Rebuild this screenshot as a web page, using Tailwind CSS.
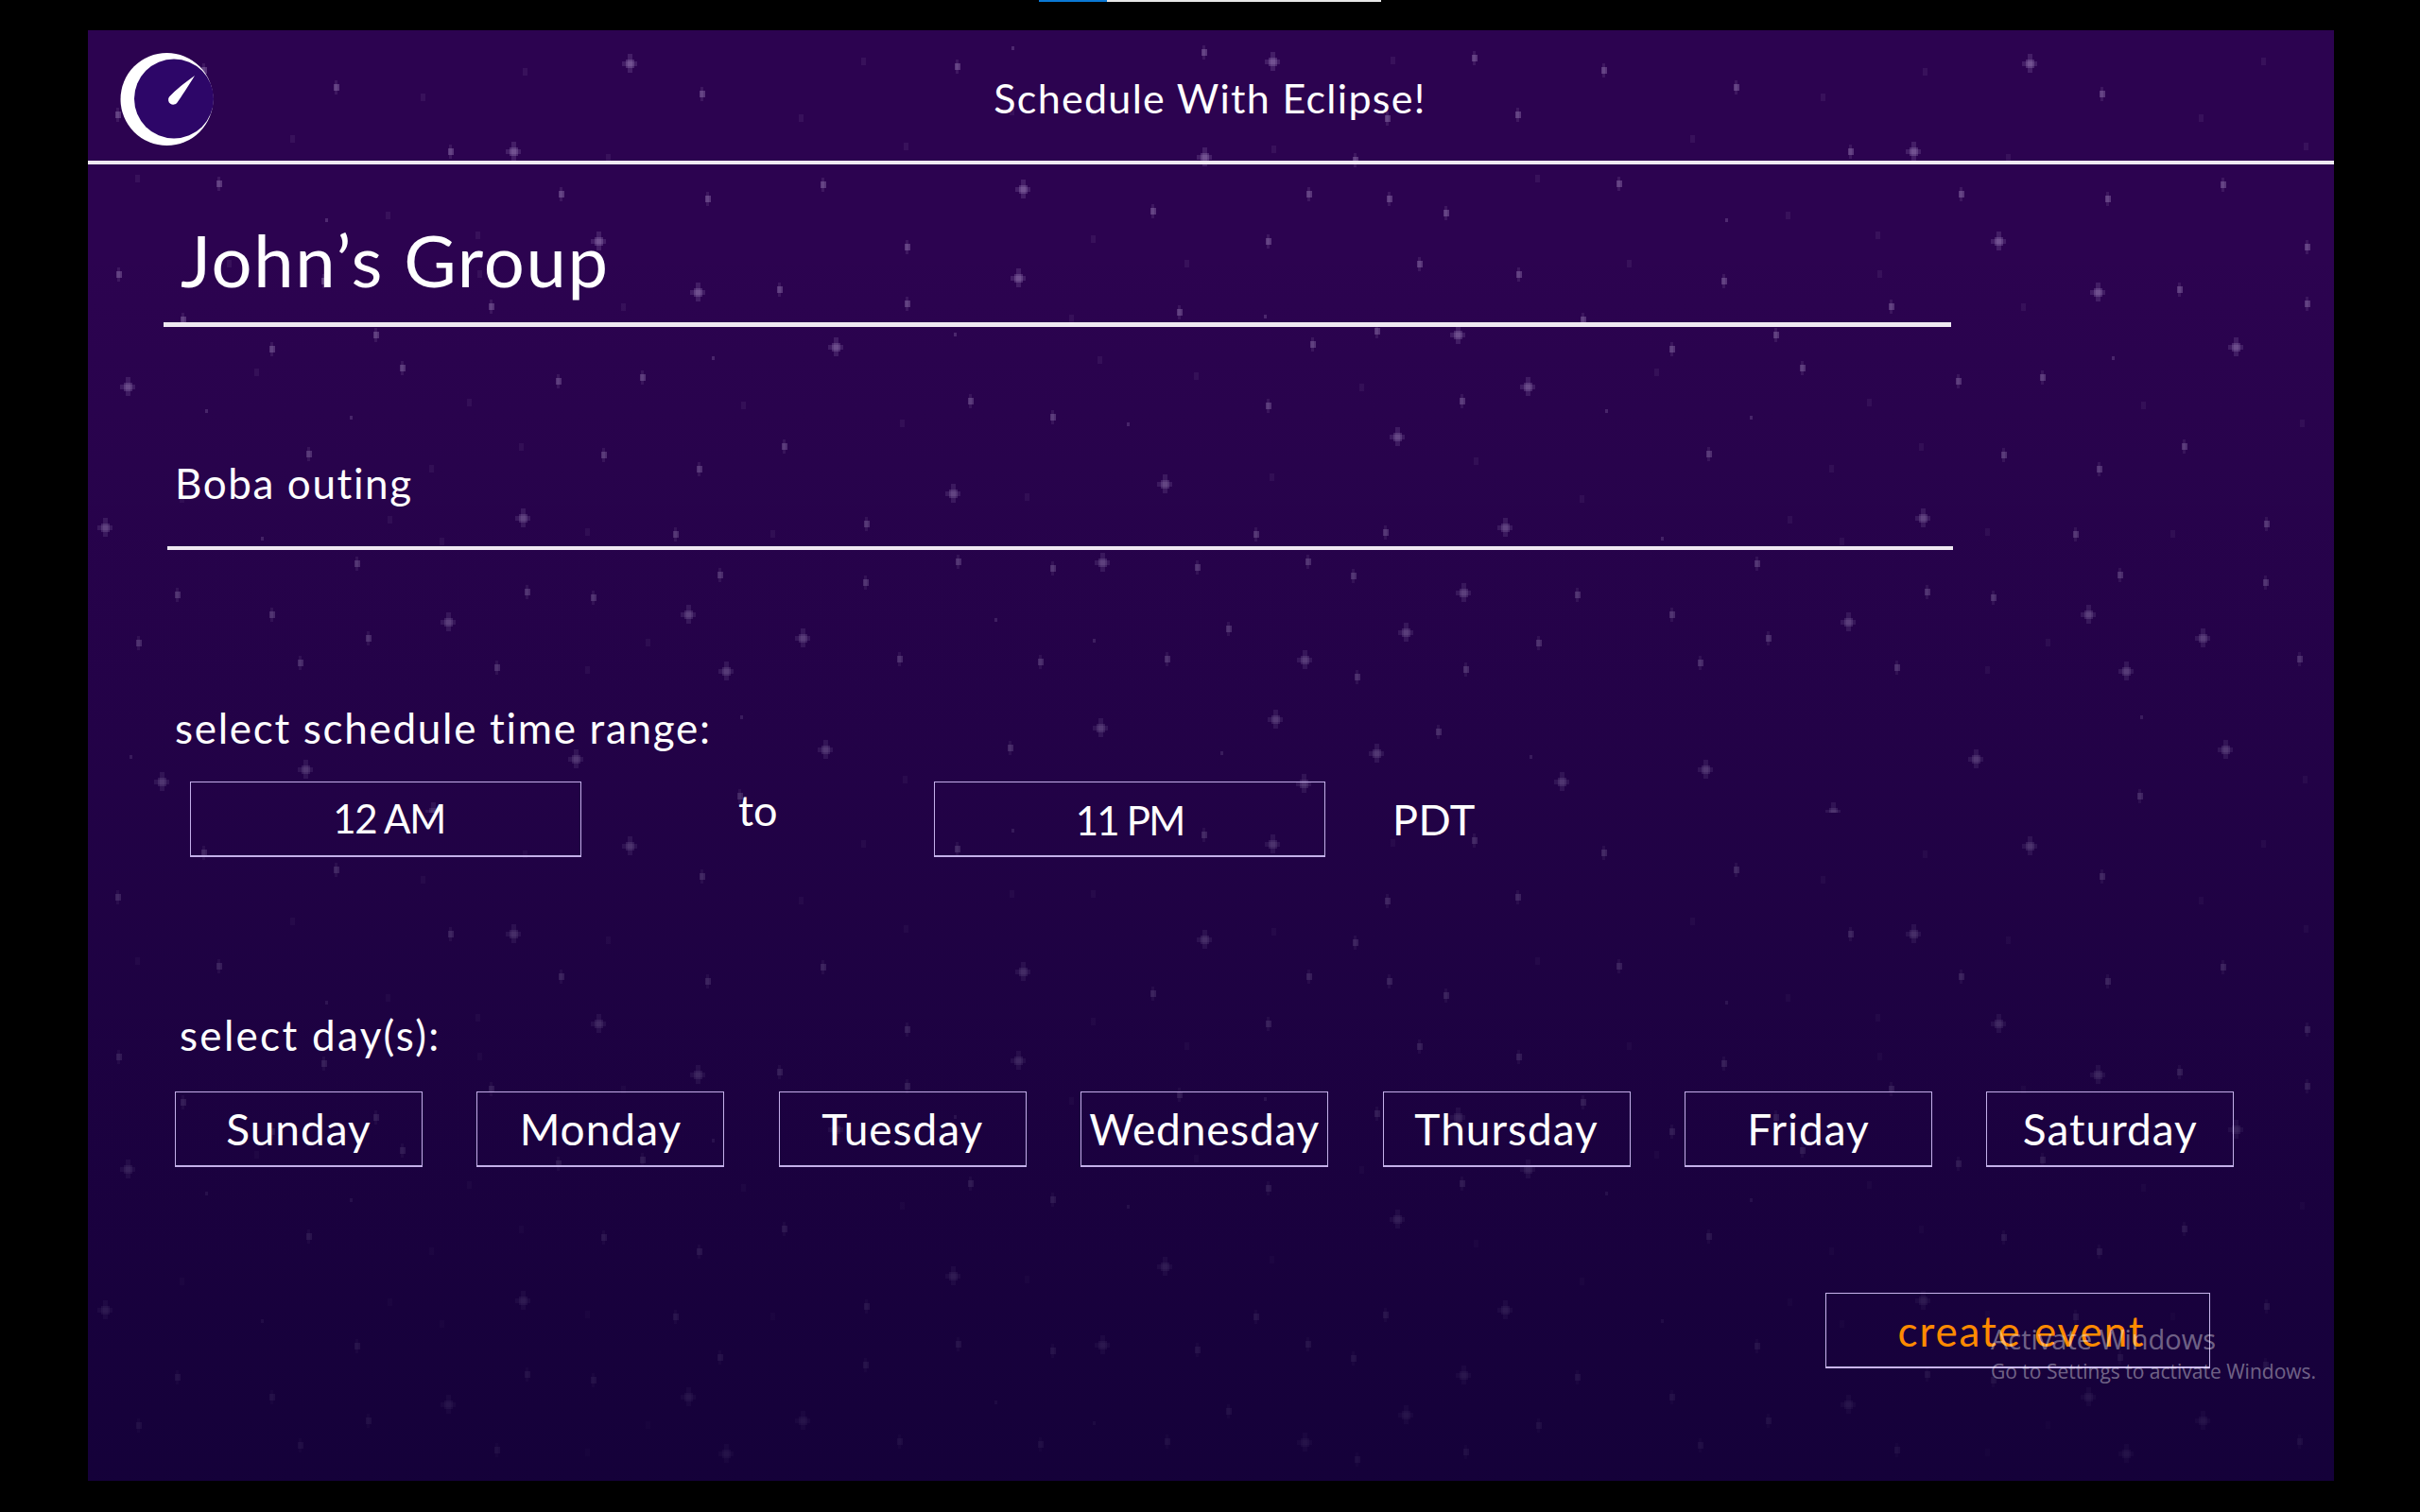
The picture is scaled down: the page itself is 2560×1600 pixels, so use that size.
<!doctype html>
<html>
<head>
<meta charset="utf-8">
<script src="https://cdn.jsdelivr.net/npm/@tailwindcss/browser@4"></script>
</head>
<body class="bg-black">
<div class="relative w-[2560px] h-[1600px] bg-black pt-[32px] pl-[93px] overflow-hidden font-['Lato','Liberation_Sans',sans-serif] text-white">
  <div class="absolute top-0 left-[1099px] w-[362px] h-[2px] bg-[#e8e8e8]"><div class="w-[72px] h-[2px] bg-[#0a78d4]"></div></div>

  <div class="relative w-[2376px] h-[1535px] bg-[#2c0350] overflow-hidden">
    <svg class="absolute inset-0" width="2376" height="1535" shape-rendering="crispEdges">
      <defs>
        <g id="L" fill="#d8c4f0"><rect x="-8" y="-2" width="16" height="5" fill-opacity=".14"/><rect x="-2" y="-10" width="5" height="20" fill-opacity=".14"/><rect x="-4" y="-4" width="9" height="9" fill-opacity=".2"/></g>
        <g id="m" fill="#d8c4f0"><rect x="-3" y="-3" width="6" height="7" fill-opacity=".26"/><rect x="-2" y="-7" width="3" height="15" fill-opacity=".1"/></g>
        <g id="d" fill="#d8c4f0"><rect x="-2" y="-4" width="5" height="8" fill-opacity=".07"/></g>
        <g id="s" fill="#d8c4f0"><rect x="-2" y="-2" width="3" height="4" fill-opacity=".2"/></g>
        <pattern id="stars" width="1481" height="828" patternUnits="userSpaceOnUse">
          <use href="#L" x="573" y="35"/><use href="#d" x="462" y="44"/><use href="#m" x="263" y="60"/><use href="#m" x="650" y="67"/><use href="#d" x="354" y="71"/><use href="#d" x="754" y="93"/><use href="#m" x="32" y="89"/><use href="#m" x="123" y="42"/><use href="#d" x="216" y="115"/><use href="#m" x="384" y="128"/><use href="#L" x="450" y="128"/><use href="#d" x="550" y="135"/><use href="#d" x="52" y="157"/><use href="#m" x="139" y="162"/><use href="#m" x="501" y="173"/><use href="#m" x="656" y="178"/><use href="#m" x="778" y="163"/><use href="#d" x="317" y="196"/><use href="#s" x="253" y="201"/><use href="#d" x="412" y="217"/><use href="#L" x="540" y="223"/><use href="#m" x="33" y="258"/><use href="#m" x="250" y="265"/><use href="#d" x="149" y="247"/><use href="#d" x="414" y="258"/><use href="#L" x="645" y="277"/><use href="#m" x="732" y="274"/><use href="#m" x="427" y="292"/><use href="#d" x="566" y="293"/><use href="#m" x="101" y="306"/><use href="#m" x="305" y="322"/><use href="#m" x="195" y="337"/><use href="#L" x="791" y="335"/><use href="#s" x="662" y="347"/><use href="#m" x="333" y="357"/><use href="#d" x="178" y="362"/><use href="#L" x="42" y="377"/><use href="#m" x="498" y="371"/><use href="#m" x="587" y="367"/><use href="#d" x="403" y="394"/><use href="#d" x="693" y="397"/><use href="#s" x="126" y="403"/><use href="#s" x="279" y="410"/>
          <use href="#m" x="234" y="448"/><use href="#m" x="546" y="449"/><use href="#m" x="737" y="440"/><use href="#d" x="458" y="441"/><use href="#d" x="363" y="464"/><use href="#m" x="647" y="464"/><use href="#d" x="99" y="496"/><use href="#L" x="18" y="526"/><use href="#L" x="460" y="516"/><use href="#d" x="319" y="518"/><use href="#d" x="528" y="531"/><use href="#m" x="622" y="533"/><use href="#d" x="724" y="533"/><use href="#s" x="185" y="538"/><use href="#d" x="374" y="541"/><use href="#m" x="285" y="564"/><use href="#m" x="669" y="576"/><use href="#m" x="95" y="597"/><use href="#m" x="465" y="594"/><use href="#m" x="535" y="600"/><use href="#m" x="195" y="618"/><use href="#L" x="381" y="626"/><use href="#L" x="635" y="618"/><use href="#L" x="756" y="643"/><use href="#m" x="297" y="643"/><use href="#m" x="54" y="648"/><use href="#d" x="592" y="648"/><use href="#m" x="225" y="669"/><use href="#m" x="433" y="674"/><use href="#d" x="528" y="677"/><use href="#L" x="675" y="678"/><use href="#s" x="692" y="727"/><use href="#L" x="780" y="761"/><use href="#s" x="46" y="769"/><use href="#L" x="516" y="771"/><use href="#L" x="230" y="782"/><use href="#L" x="78" y="795"/><use href="#m" x="690" y="810"/><use href="#L" x="365" y="827"/>
          <use href="#s" x="979" y="19"/><use href="#m" x="1181" y="23"/><use href="#L" x="1253" y="33"/><use href="#m" x="1467" y="29"/><use href="#d" x="820" y="33"/><use href="#m" x="920" y="38"/><use href="#d" x="1380" y="32"/><use href="#m" x="1375" y="93"/><use href="#m" x="1513" y="63"/><use href="#d" x="977" y="86"/><use href="#d" x="1063" y="86"/><use href="#d" x="865" y="123"/><use href="#L" x="1181" y="134"/><use href="#d" x="1254" y="126"/><use href="#m" x="1341" y="137"/><use href="#L" x="989" y="168"/><use href="#m" x="1292" y="173"/><use href="#m" x="1377" y="178"/><use href="#m" x="1127" y="191"/><use href="#m" x="1437" y="193"/><use href="#d" x="1063" y="221"/><use href="#m" x="867" y="229"/><use href="#m" x="1249" y="223"/><use href="#d" x="1162" y="247"/><use href="#m" x="1409" y="247"/><use href="#L" x="984" y="262"/><use href="#m" x="867" y="289"/><use href="#m" x="1155" y="298"/><use href="#s" x="1246" y="303"/><use href="#d" x="1040" y="305"/><use href="#s" x="918" y="322"/><use href="#m" x="1364" y="318"/><use href="#L" x="1449" y="322"/><use href="#m" x="1296" y="332"/><use href="#d" x="1070" y="349"/><use href="#d" x="1172" y="366"/><use href="#d" x="1347" y="378"/><use href="#m" x="934" y="392"/><use href="#m" x="1249" y="397"/><use href="#m" x="1454" y="392"/><use href="#m" x="1021" y="409"/><use href="#d" x="861" y="416"/><use href="#s" x="1101" y="417"/>
          <use href="#L" x="1385" y="430"/><use href="#d" x="1468" y="456"/><use href="#d" x="1252" y="473"/><use href="#L" x="1139" y="480"/><use href="#L" x="915" y="490"/><use href="#d" x="993" y="494"/><use href="#m" x="824" y="522"/><use href="#m" x="1236" y="533"/><use href="#m" x="1373" y="531"/><use href="#m" x="921" y="562"/><use href="#m" x="1021" y="569"/><use href="#L" x="1073" y="563"/><use href="#m" x="1174" y="568"/><use href="#m" x="1291" y="562"/><use href="#m" x="1339" y="577"/><use href="#m" x="823" y="584"/><use href="#L" x="1455" y="595"/><use href="#s" x="961" y="624"/><use href="#m" x="1207" y="633"/><use href="#L" x="1394" y="637"/><use href="#s" x="1065" y="646"/><use href="#m" x="859" y="665"/><use href="#m" x="1008" y="668"/><use href="#m" x="1142" y="665"/><use href="#L" x="1287" y="666"/><use href="#m" x="1458" y="676"/><use href="#m" x="1343" y="684"/><use href="#L" x="1256" y="729"/><use href="#L" x="1071" y="738"/><use href="#m" x="1429" y="742"/><use href="#m" x="976" y="759"/><use href="#s" x="1200" y="765"/><use href="#L" x="1363" y="765"/><use href="#L" x="1286" y="797"/><use href="#d" x="864" y="793"/>
        </pattern>
      </defs>
      <rect width="2376" height="1535" fill="url(#stars)"/>
    </svg>
    <div class="absolute inset-0 bg-[linear-gradient(to_bottom,rgba(15,0,52,0)_15%,rgba(15,0,52,0.8)_100%)]"></div>

    <div class="relative">
      <header class="relative flex items-center justify-center h-[142px] border-b-4 border-[#efe9f2]">
        <svg class="absolute left-[34px] top-[23px]" width="100" height="100" viewBox="0 0 100 100">
          <circle cx="49.5" cy="50" r="49" fill="#fff"/>
          <circle cx="57" cy="49.5" r="42" fill="#2d0668"/>
          <path d="M79 25C71 38 65 47 60.5 53.5A5.2 5.2 0 0 1 52 47.5C59 40 69 32 79 25Z" fill="#fff"/>
        </svg>
        <div class="text-[43px] leading-[50px] tracking-[1.3px] ml-[-2px] mt-[6px]">Schedule With Eclipse!</div>
      </header>

      <div class="ml-[80px] w-[1891px] h-[172px] border-b-[5px] border-[#efe9f2] pl-[18px] pt-[56px]">
        <div class="text-[76px] leading-[90px] tracking-[1.7px]">John’s Group</div>
      </div>

      <div class="ml-[84px] w-[1889px] h-[236px] border-b-[4px] border-[#efe9f2] pl-[8px] pt-[139px]">
        <div class="text-[44px] leading-[52px] tracking-[1.6px]">Boba outing</div>
      </div>

      <div class="ml-[92px] mt-[162px] h-[52px] text-[44px] leading-[52px] tracking-[1.7px]">select schedule time range:</div>

      <div class="flex mt-[31px] ml-[108px] h-[80px]">
        <div class="w-[414px] h-[80px] border border-b-2 border-[#c4b0ea] flex items-center justify-center text-[42px] tracking-[-1.4px] pl-[7px]">12 AM</div>
        <div class="w-[373px] text-[45px] leading-[54px] pl-[166px] pt-[3px]">to</div>
        <div class="w-[414px] h-[80px] border border-b-2 border-[#c4b0ea] flex items-center justify-center text-[42px] tracking-[-1.8px] pt-[4px]">11 PM</div>
        <div class="ml-[71px] text-[45px] leading-[80px] tracking-[0.5px]">PDT</div>
      </div>

      <div class="ml-[97px] mt-[162px] h-[52px] text-[44px] leading-[52px] tracking-[2.3px]">select day(s):</div>

      <div class="flex gap-[57.4px] mt-[34px] ml-[92px]">
        <div class="w-[262px] h-[80px] border border-b-2 border-[#c4b0ea] flex items-center justify-center text-[46px] tracking-[1px] whitespace-nowrap">Sunday</div>
        <div class="w-[262px] h-[80px] border border-b-2 border-[#c4b0ea] flex items-center justify-center text-[46px] tracking-[1px] whitespace-nowrap">Monday</div>
        <div class="w-[262px] h-[80px] border border-b-2 border-[#c4b0ea] flex items-center justify-center text-[46px] tracking-[1px] whitespace-nowrap">Tuesday</div>
        <div class="w-[262px] h-[80px] border border-b-2 border-[#c4b0ea] flex items-center justify-center text-[46px] tracking-[0.8px] whitespace-nowrap">Wednesday</div>
        <div class="w-[262px] h-[80px] border border-b-2 border-[#c4b0ea] flex items-center justify-center text-[46px] tracking-[1px] whitespace-nowrap">Thursday</div>
        <div class="w-[262px] h-[80px] border border-b-2 border-[#c4b0ea] flex items-center justify-center text-[46px] tracking-[1px] whitespace-nowrap">Friday</div>
        <div class="w-[262px] h-[80px] border border-b-2 border-[#c4b0ea] flex items-center justify-center text-[46px] tracking-[1px] whitespace-nowrap">Saturday</div>
      </div>

      <div class="mt-[133px] ml-[1838px] w-[407px] h-[80px] border border-b-2 border-[#c9b6ee] flex items-center justify-center text-[44px] tracking-[1.9px] text-[#ff8a00] pl-[8px]">create event</div>
    </div>
  </div>

  <div class="absolute left-[2106px] top-[1398px] text-white/40 font-['Open_Sans',sans-serif]">
    <div class="text-[29px] leading-[38px]">Activate Windows</div>
    <div class="text-[21px] leading-[30px]">Go to Settings to activate Windows.</div>
  </div>
</div>
</body>
</html>
